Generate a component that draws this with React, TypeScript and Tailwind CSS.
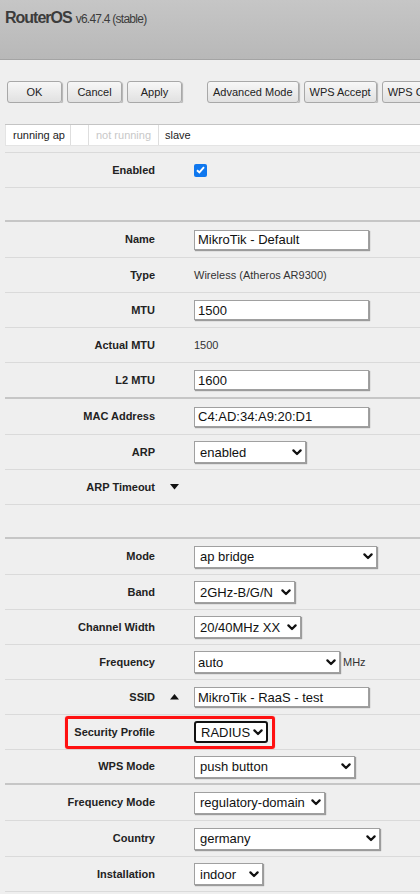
import React from "react";

const FONT = { fontFamily: '"Liberation Sans", Arial, sans-serif' };

function Chevron() {
  return (
    <svg width="10" height="7" viewBox="0 0 10 7" className="shrink-0">
      <path d="M1.4 1.4 L5 5 L8.6 1.4" fill="none" stroke="#111" strokeWidth="2.2" strokeLinecap="round" strokeLinejoin="round" />
    </svg>
  );
}

function TextBox({ value }: { value: string }) {
  return (
    <div className="w-[175px] h-[20px] bg-white border border-[#a0a0a0] shadow-[1px_1px_1px_rgba(0,0,0,0.35)] pl-[3px] flex items-center text-[13px] text-[#111] whitespace-nowrap leading-none">
      {value}
    </div>
  );
}

function Select({ value, w, pl = "pl-[5px]", focused = false }: { value: string; w: string; pl?: string; focused?: boolean }) {
  const border = focused
    ? "border-2 border-[#111] rounded-[3px]"
    : "border border-[#a0a0a0] shadow-[1px_1px_1px_rgba(0,0,0,0.35)]";
  return (
    <div className={`${w} h-[22px] bg-white ${border} ${pl} pr-[3px] flex items-center justify-between text-[13px] text-[#111] whitespace-nowrap leading-none`}>
      <span>{value}</span>
      <Chevron />
    </div>
  );
}

function Plain({ value }: { value: string }) {
  return <span className="text-[11px] text-[#333]">{value}</span>;
}

type RowDef = {
  label?: string;
  h: string;
  thick?: boolean;
  icon?: "up" | "down";
  value?: React.ReactNode;
  highlight?: boolean;
};

function Row({ r }: { r: RowDef }) {
  const border = r.thick ? "border-b-2 border-[#c6c6c6]" : "border-b border-[#dadada]";
  return (
    <div className={`relative flex items-center ${r.h} ${border}`}>
      <div className="w-[150px] text-right text-[11px] font-bold text-[#222] whitespace-nowrap">{r.label}</div>
      <div className="w-[39px] flex justify-center">
        {r.icon === "down" && (
          <svg width="9" height="6" viewBox="0 0 9 6"><path d="M0 0 H9 L4.5 5.5 Z" fill="#111" /></svg>
        )}
        {r.icon === "up" && (
          <svg width="9" height="6" viewBox="0 0 9 6"><path d="M0 5.5 H9 L4.5 0 Z" fill="#111" /></svg>
        )}
      </div>
      <div className="flex items-center">{r.value}</div>
      {r.highlight && (
        <div className="absolute left-[60px] top-[1px] w-[210px] h-[33px] border-[3px] border-[#ff1010] rounded-[3px] shadow-[0_0_1px_rgba(255,0,0,0.6)]" />
      )}
    </div>
  );
}

function Btn({ children, w }: { children: React.ReactNode; w?: string }) {
  return (
    <div
      className={`${w ?? "px-[5px]"} h-[22px] shrink-0 flex items-center justify-center rounded-[3px] border border-[#a8a8a8] bg-gradient-to-b from-[#f7f7f7] to-[#e1e1e1] shadow-[1px_1px_1px_rgba(0,0,0,0.25)] text-[11px] text-[#222] whitespace-nowrap`}
    >
      {children}
    </div>
  );
}

export default function App() {
  const rows: RowDef[] = [
    {
      label: "Enabled",
      h: "h-[35px]",
      value: (
        <div className="w-[13px] h-[13px] rounded-[2px] bg-[#0f77ee] flex items-center justify-center">
          <svg width="9" height="8" viewBox="0 0 9 8"><path d="M1 4.2 L3.4 6.4 L8 1.2" fill="none" stroke="#fff" strokeWidth="1.9" /></svg>
        </div>
      ),
    },
    { h: "h-[34px]", thick: true },
    { label: "Name", h: "h-[36px]", value: <TextBox value="MikroTik - Default" /> },
    { label: "Type", h: "h-[35px]", value: <Plain value="Wireless (Atheros AR9300)" /> },
    { label: "MTU", h: "h-[35px]", value: <TextBox value="1500" /> },
    { label: "Actual MTU", h: "h-[35px]", value: <Plain value="1500" /> },
    { label: "L2 MTU", h: "h-[36px]", thick: true, value: <TextBox value="1600" /> },
    { label: "MAC Address", h: "h-[36px]", value: <TextBox value="C4:AD:34:A9:20:D1" /> },
    { label: "ARP", h: "h-[35px]", value: <Select value="enabled" w="w-[112px]" /> },
    { label: "ARP Timeout", h: "h-[35px]", icon: "down" },
    { h: "h-[34px]", thick: true },
    { label: "Mode", h: "h-[36px]", value: <Select value="ap bridge" w="w-[183px]" /> },
    { label: "Band", h: "h-[35px]", value: <Select value="2GHz-B/G/N" w="w-[101px]" /> },
    { label: "Channel Width", h: "h-[35px]", value: <Select value="20/40MHz XX" w="w-[107px]" /> },
    {
      label: "Frequency",
      h: "h-[35px]",
      value: (
        <div className="flex items-center gap-[3px]">
          <Select value="auto" w="w-[146px]" pl="pl-[3px]" />
          <span className="text-[11px] text-[#333]">MHz</span>
        </div>
      ),
    },
    { label: "SSID", h: "h-[35px]", icon: "up", value: <TextBox value="MikroTik - RaaS - test" /> },
    { label: "Security Profile", h: "h-[35px]", highlight: true, value: <Select value="RADIUS" w="w-[74px]" pl="pl-[5px]" focused /> },
    { label: "WPS Mode", h: "h-[35px]", thick: true, value: <Select value="push button" w="w-[161px]" /> },
    { label: "Frequency Mode", h: "h-[36px]", value: <Select value="regulatory-domain" w="w-[131px]" /> },
    { label: "Country", h: "h-[36px]", value: <Select value="germany" w="w-[186px]" /> },
    { label: "Installation", h: "h-[35px]", value: <Select value="indoor" w="w-[69px]" /> },
  ];

  return (
    <div style={FONT} className="w-[420px] min-h-screen overflow-hidden bg-[#efefef] text-[#222]">
      <div className="h-[60px] border-b border-[#a4a4a4] bg-gradient-to-b from-[#c6c6c6] to-[#b8b8b8] pl-[5px] pt-[9px]">
        <div className="flex items-baseline leading-[18px] text-[#3c3c3c] whitespace-nowrap">
          <span className="text-[16px] font-bold tracking-[-1px]">RouterOS</span>
          <span className="ml-[4px] text-[12px] tracking-[-0.75px]">v6.47.4 (stable)</span>
        </div>
      </div>

      <div className="mt-[21px] flex pl-[7px] gap-[5px] overflow-hidden">
        <Btn w="w-[55px]">OK</Btn>
        <Btn w="w-[55px]">Cancel</Btn>
        <Btn w="w-[55px]">Apply</Btn>
        <div className="w-[15px] shrink-0" />
        <Btn>Advanced Mode</Btn>
        <Btn>WPS Accept</Btn>
        <Btn>WPS Client</Btn>
      </div>

      <div className="mt-[21px] ml-[5px] h-[21px] flex border-t border-[#c4c4c4] bg-white text-[11px] whitespace-nowrap shadow-[0_1px_0_#e4e4e4]">
        <div className="w-[66px] pl-[7px] flex items-center border-r border-[#dedede] border-l border-l-[#e4e4e4]">running ap</div>
        <div className="w-[18px] border-r border-[#dedede]" />
        <div className="w-[70px] pl-[7px] flex items-center border-r border-[#dedede] text-[#c8c8c8]">not running</div>
        <div className="flex-1 pl-[6px] flex items-center">slave</div>
      </div>

      <div className="mt-[7px] ml-[5px] border-t border-[#dadada]">
        {rows.map((r, i) => (
          <Row key={i} r={r} />
        ))}
      </div>
    </div>
  );
}
